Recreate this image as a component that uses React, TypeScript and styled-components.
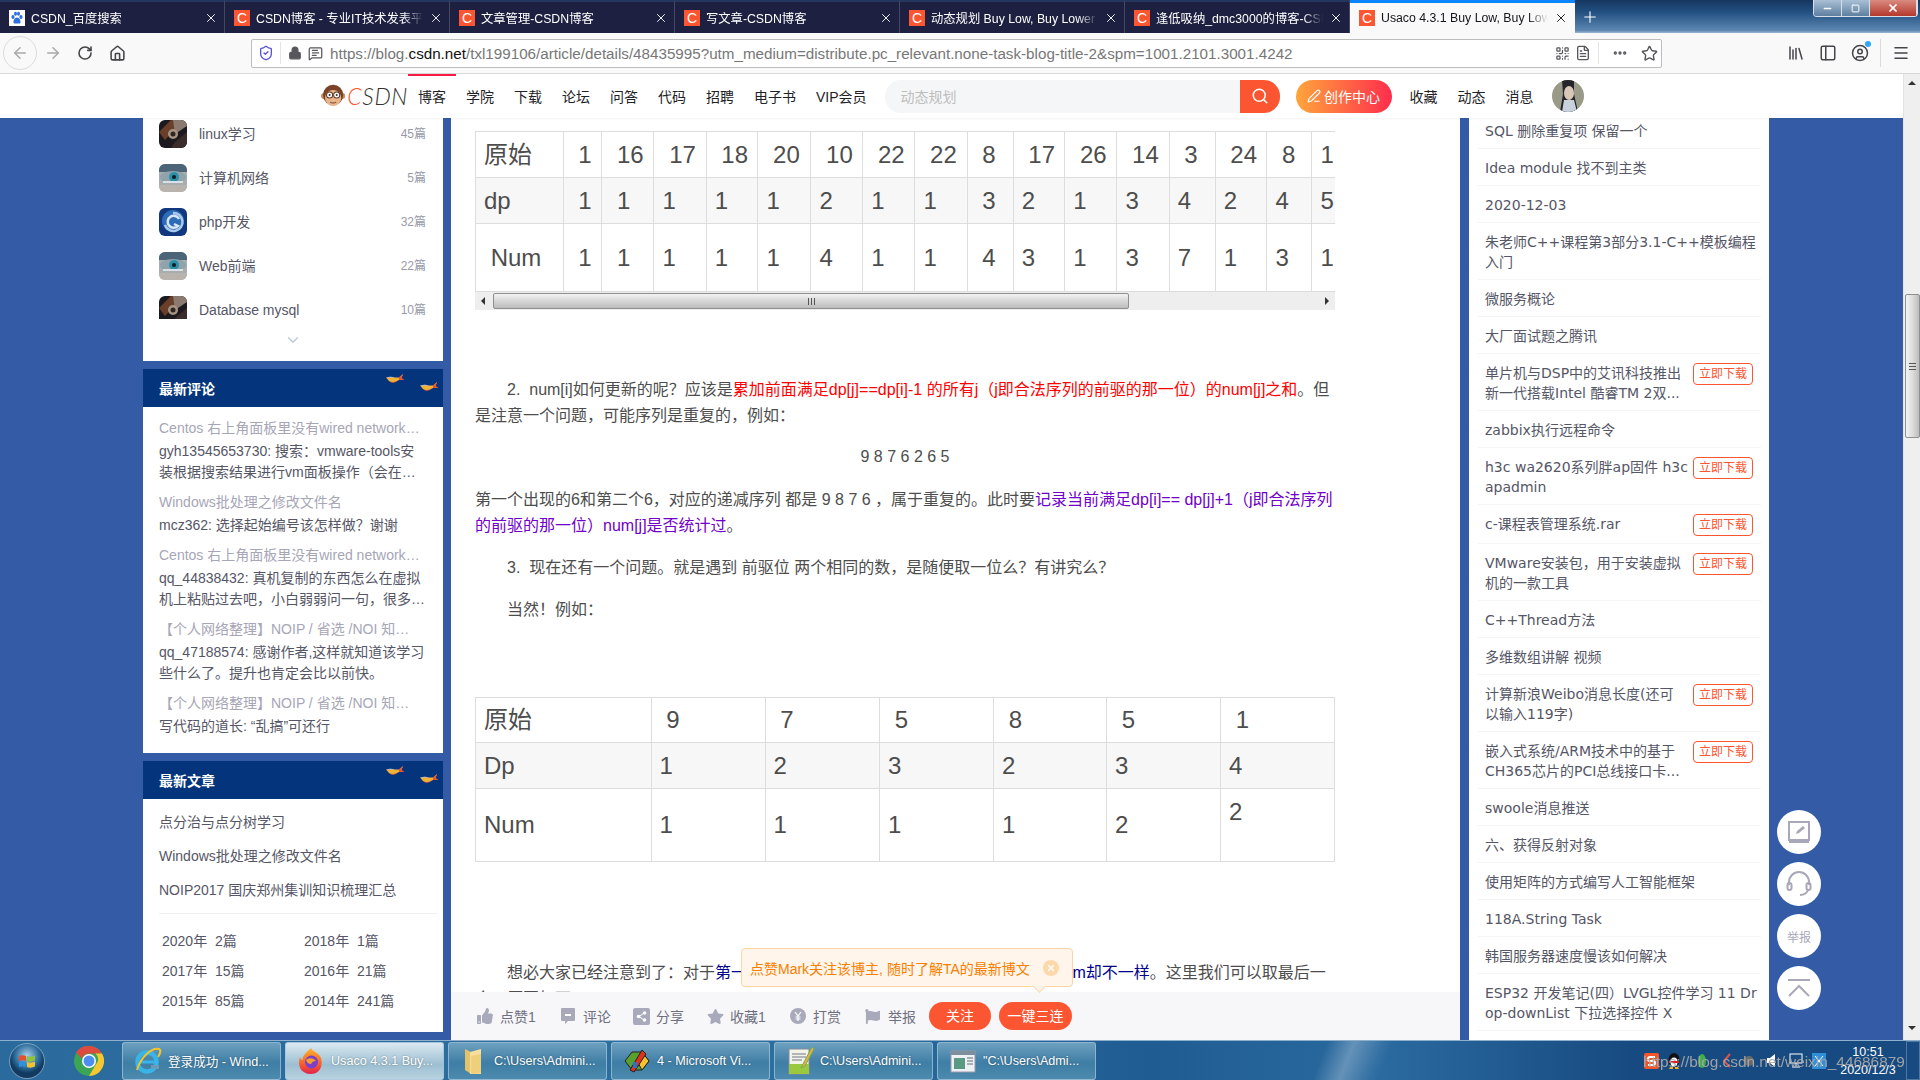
import React from "react";
import styled, { createGlobalStyle } from "styled-components";
import { ArrowLeft, ArrowRight, RotateCw, House, Star, Ellipsis, Menu, QrCode, Lock, MessageSquareText, X, Plus, Search, PenLine, ChevronDown, Minus, Square, FileText, CircleUser, PanelLeft, Library, ShieldCheck } from "lucide-react";
import { FaThumbsUp, FaFlag, FaStar } from "react-icons/fa";

const sans = `"Liberation Sans", "Noto Sans CJK SC", sans-serif`;

const Global = createGlobalStyle`
  html, body { margin: 0; padding: 0; width: 1920px; height: 1080px; overflow: hidden; background: #fff; }
  * { box-sizing: border-box; }
  body { font-family: ${sans}; }
`;

const Screen = styled.div`width:1920px;height:1080px;display:flex;flex-direction:column;overflow:hidden;`;

/* ---------- tabs ---------- */
const TabStrip = styled.div`
  height:33px;display:flex;flex:none;
  background:linear-gradient(180deg,#16355f 0%,#214f80 35%,#5c86b2 92%,#9cb6d0 100%);
  position:relative;
`;
const Tab = styled.div<{ $active?: boolean }>`
  width:225px;height:33px;display:flex;align-items:center;padding-left:9px;flex:none;
  background:${p => (p.$active ? "#f9f9fa" : "#1d2040")};
  color:${p => (p.$active ? "#15141a" : "#fff")};
  border-top:${p => (p.$active ? "3px solid #0a84ff" : "2px solid #24375e")};
  border-right:${p => (p.$active ? "none" : "1px solid #454863")};
  font-size:12.3px;
`;
const Favicon = styled.span`
  width:16px;height:16px;background:#fc5531;color:#fff;font-size:14px;line-height:16px;text-align:center;flex:none;
  font-family:${sans};
`;
const BaiduIcon = styled.span`
  width:16px;height:16px;background:#fff;flex:none;display:flex;align-items:center;justify-content:center;
`;
const TabTitle = styled.span`
  width:167px;margin-left:6px;white-space:nowrap;overflow:hidden;
  mask-image:linear-gradient(90deg,#000 88%,transparent 100%);
`;
const TabClose = styled.span`width:20px;margin-left:3px;display:flex;align-items:center;justify-content:center;`;
const NewTab = styled.span`width:30px;display:flex;align-items:center;justify-content:center;color:#fff;`;
const WinButtons = styled.div`
  margin-left:auto;margin-right:2px;height:17px;display:flex;border:1px solid #d5e0ea;border-top:none;border-radius:0 0 4px 4px;overflow:hidden;
`;
const WinButton = styled.span<{ $w: number; $close?: boolean }>`
  width:${p => p.$w}px;display:flex;align-items:center;justify-content:center;color:#fff;
  background:${p => (p.$close ? "linear-gradient(180deg,#d98a80,#b5382c)" : "linear-gradient(180deg,#a9c0d6,#5e7f9f)")};
  border-right:1px solid #d5e0ea;
`;

/* ---------- nav toolbar ---------- */
const NavBar = styled.div`
  height:41px;display:flex;align-items:center;flex:none;background:#f9f9fa;border-bottom:1px solid #d8d8d8;color:#4a4a4f;padding-left:3px;
`;
const BackCircle = styled.span`
  width:34px;height:34px;border-radius:50%;border:1px solid #dcdcdc;display:flex;align-items:center;justify-content:center;color:#a8a8a8;flex:none;
`;
const NavIcon = styled.span<{ $dim?: boolean }>`
  width:32px;display:flex;align-items:center;justify-content:center;flex:none;color:${p => (p.$dim ? "#a8a8a8" : "#45454a")};position:relative;
`;
const UrlBar = styled.div`
  width:1411px;height:29px;margin:0 118px;background:#fff;border:1px solid #bdbdbd;border-radius:2px;display:flex;align-items:center;flex:none;padding-left:4px;
`;
const UrlIcon = styled.span<{ $w: number }>`
  width:${p => p.$w}px;display:flex;align-items:center;justify-content:center;flex:none;color:#56565c;
`;
const UrlSep = styled.span`width:1px;height:22px;background:#e4e4e4;flex:none;margin:0 4px;`;
const UrlText = styled.span`
  font-size:15.2px;color:#777;white-space:nowrap;flex:1;overflow:hidden;margin-left:5px;
  b{font-weight:400;color:#111;}
`;
const ToolSep = styled.span`width:1px;height:28px;background:#dcdcdc;flex:none;margin:0 4px;`;
const BlueDot = styled.i`position:absolute;right:5px;top:-3px;width:6px;height:6px;border-radius:50%;background:#30a8f5;`;

/* ---------- page ---------- */
const Viewport = styled.div`flex:1;display:flex;min-height:0;`;
const Page = styled.div`flex:1;display:flex;flex-direction:column;min-width:0;`;
const VScroll = styled.div`
  width:17px;flex:none;background:#efefef;display:flex;flex-direction:column;align-items:center;color:#333;font-size:8px;
  border-left:1px solid #e6e6e6;
`;
const VArrow = styled.span<{ $down?: boolean }>`
  width:0;height:0;border-left:4px solid transparent;border-right:4px solid transparent;margin:${p => (p.$down ? "auto 0 10px" : "7px 0 0")};
  ${p => (p.$down ? "border-top:4px solid #333;" : "border-bottom:4px solid #333;")}
`;
const VThumb = styled.div`
  width:15px;height:144px;margin-top:209px;border:1px solid #8f8f8f;border-radius:2px;
  background:linear-gradient(90deg,#f3f3f3,#dcdcdc 50%,#bdbdbd);display:flex;align-items:center;justify-content:center;
`;
const Grip = styled.span`width:7px;height:7px;border-top:1px solid #555;border-bottom:1px solid #555;position:relative;
  &::after{content:"";position:absolute;left:0;right:0;top:2px;height:1px;background:#555;}`;

const Header = styled.div`
  height:44px;flex:none;background:#fff;display:flex;align-items:center;padding-left:321px;box-shadow:0 1px 2px rgba(0,0,0,.05);position:relative;z-index:2;
`;
const Logo = styled.div`width:87px;display:flex;align-items:center;flex:none;`;
const LogoText = styled.span`
  font-family:Lato,"Liberation Sans",sans-serif;font-size:23px;font-style:italic;font-weight:300;color:#333;letter-spacing:.6px;margin-left:2px;line-height:24px;
  i{color:#fc5531;}
`;
const NavLink = styled.a<{ $active?: boolean }>`
  padding:0 10px;height:44px;line-height:42px;font-size:14px;color:#222226;white-space:nowrap;flex:none;
  border-top:2px solid ${p => (p.$active ? "#fc1944" : "transparent")};
`;
const SearchBox = styled.div`
  width:395px;height:33px;margin-left:8px;background:#f5f6f7;border-radius:16px;display:flex;align-items:center;flex:none;overflow:hidden;
`;
const Placeholder = styled.span`flex:1;padding-left:16px;font-size:14px;color:#bdbdbd;`;
const SearchBtn = styled.span`
  width:40px;height:33px;background:#fc5531;display:flex;align-items:center;justify-content:center;color:#fff;
`;
const CreateBtn = styled.span`
  width:96px;height:33px;margin:0 8px 0 16px;border-radius:17px;background:linear-gradient(90deg,#ffa53b,#ff2d4d);color:#fff;font-size:14px;
  display:flex;align-items:center;justify-content:center;gap:3px;flex:none;
`;
const AvatarRound = styled.span`width:32px;height:32px;margin-left:8px;border-radius:50%;overflow:hidden;flex:none;display:block;`;

const Columns = styled.div`flex:1;display:flex;min-height:0;`;
const LeftCol = styled.aside`
  width:451px;flex:none;background:#345ba5;padding:0 8px 0 143px;display:flex;flex-direction:column;gap:8px;overflow:hidden;
`;
const Card = styled.section`background:#fff;flex:none;`;
const CatList = styled.div`height:201px;padding-top:2px;overflow:hidden;`;
const CatRow = styled.div`height:44px;display:flex;padding:0 17px 0 16px;color:#555666;font-size:14px;line-height:28px;`;
const CatThumb = styled.span`width:28px;height:28px;border-radius:6px;overflow:hidden;flex:none;margin-right:12px;display:block;`;
const CatCount = styled.span`margin-left:auto;font-size:12px;color:#9a9aaa;`;
const More = styled.div`height:42px;display:flex;justify-content:center;padding-top:12px;color:#b4c3da;`;
const CardHead = styled.div`
  height:38px;background:#03347c;color:#fff;font-size:14px;font-weight:700;display:flex;align-items:center;padding-left:16px;position:relative;
`;
const Fish = styled.svg<{ $r: number; $t: number }>`position:absolute;right:${p => p.$r}px;top:${p => p.$t}px;`;
const CommentList = styled.div`padding:8px 16px 9.5px;`;
const CommentItem = styled.div`margin-bottom:6px;`;
const CommentTitle = styled.div`
  height:26px;line-height:26px;width:264px;color:#a6a6b6;font-size:14px;white-space:nowrap;overflow:hidden;text-overflow:ellipsis;
`;
const CommentBody = styled.div`
  width:268px;color:#555666;font-size:14px;line-height:21px;display:-webkit-box;-webkit-box-orient:vertical;-webkit-line-clamp:2;overflow:hidden;
`;
const ArticleList = styled.div`padding-top:6px;`;
const ArticleLink = styled.div`padding-left:16px;height:34px;line-height:34px;color:#555666;font-size:14px;white-space:nowrap;`;
const Archive = styled.div`
  margin:6px 6px 0 16px;border-top:1px solid #f0f0f2;padding:12px 0 16px 3px;display:grid;grid-template-columns:142px 1fr;grid-auto-rows:30px;
  color:#555666;font-size:14px;line-height:30px;white-space:pre;
`;

/* ---------- article ---------- */
const Main = styled.main`width:1009px;flex:none;background:#fff;display:flex;flex-direction:column;min-height:0;position:relative;`;
const Article = styled.article`flex:1;overflow:hidden;padding:13px 125px 0 24px;color:#4d4d4d;font-size:16px;line-height:26px;min-height:0;`;
const TableClip = styled.div<{ $top?: number }>`width:860px;overflow:hidden;margin-top:${p => p.$top ?? 0}px;`;
const Table = styled.table<{ $w: number }>`border-collapse:collapse;table-layout:fixed;width:${p => p.$w}px;font-size:24px;line-height:28px;color:#4d4d4d;`;
const Col = styled.col<{ $w: number }>`width:${p => p.$w}px;`;
const Tr = styled.tr<{ $h: number; $alt?: boolean }>`height:${p => p.$h}px;background:${p => (p.$alt ? "#f7f7f7" : "#fff")};`;
const Td = styled.td<{ $raised?: boolean }>`
  border:1px solid #ddd;padding:${p => (p.$raised ? "8px 8px 34px" : "8px")};white-space:pre;overflow:hidden;
`;
const HScroll = styled.div`height:18px;width:860px;background:#eee;display:flex;align-items:center;`;
const HArrow = styled.span<{ $right?: boolean }>`
  width:0;height:0;border-top:4px solid transparent;border-bottom:4px solid transparent;
  ${p => (p.$right ? "border-left:4px solid #333;margin:0 6px 0 auto;" : "border-right:4px solid #333;margin:0 8px 0 6px;")}
`;
const HThumb = styled.div`
  width:636px;height:16px;border:1px solid #8f8f8f;border-radius:2px;background:linear-gradient(180deg,#f3f3f3,#d6d6d6 50%,#bdbdbd);
  display:flex;align-items:center;justify-content:center;
`;
const HGrip = styled.span`width:7px;height:7px;border-left:1px solid #555;border-right:1px solid #555;position:relative;
  &::after{content:"";position:absolute;top:0;bottom:0;left:2px;width:1px;background:#555;}`;
const P = styled.p<{ $top?: number; $center?: boolean; $flush?: boolean }>`
  margin:${p => p.$top ?? 16}px 0 0;text-indent:${p => (p.$flush ? 0 : 32)}px;text-align:${p => (p.$center ? "center" : "left")};width:860px;
`;
const Red = styled.span`color:#ff0000;`;
const Purple = styled.span`color:#7000c8;`;
const Navy = styled.span`color:#00008b;`;
const Tip = styled.div`
  position:absolute;left:290px;top:830px;width:332px;height:39px;background:#fff5eb;border:1px solid #fdd5a4;border-radius:4px;
  display:flex;align-items:center;padding-left:8px;color:#f77f00;font-size:14px;white-space:nowrap;z-index:3;
  &::after{content:"";position:absolute;right:28px;bottom:-5px;width:8px;height:8px;background:#fff5eb;border-right:1px solid #fdd5a4;border-bottom:1px solid #fdd5a4;transform:rotate(45deg);}
`;
const TipClose = styled.span`
  width:16px;height:16px;border-radius:50%;background:#fdd8ab;color:#fff;position:absolute;left:301px;top:11px;display:flex;align-items:center;justify-content:center;
`;
const ActionBar = styled.div`
  height:48px;flex:none;background:#f7f7f9;display:flex;align-items:center;padding-left:26px;color:#6f6f80;font-size:14px;position:relative;z-index:2;
`;
const Action = styled.span<{ $w: number }>`
  width:${p => p.$w}px;flex:none;display:flex;align-items:center;white-space:nowrap;
`;
const ActionIcon = styled.span`width:23px;flex:none;display:flex;align-items:center;color:#a9a9bc;`;
const RedBtn = styled.span<{ $w: number }>`
  width:${p => p.$w}px;height:28px;border-radius:14px;background:#fc5531;color:#fff;font-size:14px;line-height:28px;text-align:center;flex:none;margin-right:8px;
`;

/* ---------- right ---------- */
const RightCol = styled.aside`flex:1;background:#345ba5;padding-left:9px;position:relative;overflow:hidden;`;
const RecPanel = styled.div`width:300px;height:100%;background:#fff;padding:0 8px;overflow:hidden;`;
const RecList = styled.div`margin-top:-6px;`;
const RecRow = styled.div`
  display:flex;justify-content:space-between;align-items:flex-start;padding:9px 8px 7px;border-bottom:1px solid #f5f5f7;
  color:#555666;font-size:14px;line-height:20px;font-family:"DejaVu Sans","Noto Sans CJK SC",sans-serif;
`;
const RecText = styled.span`white-space:nowrap;`;
const DownBtn = styled.span`
  width:60px;height:22px;flex:none;border:1px solid #fc5531;border-radius:4px;color:#fc5531;font-size:12px;line-height:20px;text-align:center;
  font-family:${sans};
`;
const FloatStack = styled.div`position:absolute;left:317px;top:692px;display:flex;flex-direction:column;gap:8px;`;
const FloatBtn = styled.span`
  width:44px;height:44px;border-radius:50%;background:#fff;display:flex;align-items:center;justify-content:center;color:#a8a8b8;font-size:12px;
`;

/* ---------- taskbar ---------- */
const Taskbar = styled.div`
  height:40px;flex:none;display:flex;align-items:center;position:relative;color:#fff;border-top:1px solid #8eb0cc;
  background:
    linear-gradient(112deg,transparent 0 68.6%,rgba(255,255,255,.28) 70%,rgba(255,255,255,.05) 71.5%,transparent 72%),
    linear-gradient(90deg,#2b6a9c 0%,#2c6f9f 40%,#1f5c92 60%,#2a6a9f 72%,#174a80 85%,#164a80 100%);
`;
const Orb = styled.span`width:36px;height:36px;margin-left:9px;flex:none;display:block;`;
const Pinned = styled.span`width:30px;height:30px;margin:0 18px 0 29px;flex:none;display:block;`;
const TaskBtn = styled.div<{ $active?: boolean }>`
  width:159px;height:38px;margin-right:4px;flex:none;border:1px solid rgba(160,195,220,.75);border-radius:3px;display:flex;align-items:center;
  padding-left:10px;font-size:12.6px;white-space:nowrap;overflow:hidden;
  background:${p => (p.$active ? "linear-gradient(180deg,#dbe9f1,#9dbfd2 60%,#b8d2e0)" : "linear-gradient(180deg,#6da0bf,#3f7ea5 55%,#4c8aae)")};
  color:#fff;text-shadow:0 0 2px rgba(0,0,0,.4);
`;
const TaskIcon = styled.span`width:30px;height:30px;flex:none;margin-right:5px;display:flex;align-items:center;justify-content:center;`;
const Tray = styled.div`margin-left:auto;display:flex;align-items:center;height:100%;`;
const TrayIcon = styled.span<{ $w: number }>`width:${p => p.$w}px;flex:none;display:flex;justify-content:center;align-items:center;`;
const Clock = styled.div`width:64px;text-align:center;font-size:12.5px;line-height:18px;color:#fff;margin-left:6px;flex:none;`;
const ShowDesk = styled.div`width:14px;height:100%;margin-left:6px;border:1px solid rgba(255,255,255,.25);flex:none;`;
const Watermark = styled.span`
  position:absolute;left:1643px;top:11px;color:#a9a9a9;font-size:15.4px;white-space:nowrap;line-height:20px;opacity:.92;
`;

/* ---------- drawings ---------- */
const Swirl = () => (
  <svg width="28" height="28" viewBox="0 0 28 28"><rect width="28" height="28" fill="#11377d"/><circle cx="14" cy="13" r="11" fill="#2f6cb8"/><path d="M14 5a9 9 0 11-8 12" fill="none" stroke="#a9c9ea" strokeWidth="2.500"/><path d="M20 11a6 6 0 10-1 7l-4-2" fill="none" stroke="#d6e6f5" strokeWidth="2.500"/></svg>
);
const Eye = () => (
  <svg width="28" height="28" viewBox="0 0 28 28"><rect width="28" height="28" fill="#a9adb0"/><rect width="28" height="8" fill="#4c6478"/><rect y="21" width="28" height="7" fill="#b9b3ae"/><ellipse cx="14" cy="13" rx="13" ry="6" fill="#8fa3ad"/><circle cx="15" cy="13" r="5" fill="#2b8fa6"/><circle cx="15" cy="13" r="2" fill="#101820"/><path d="M4 18h20" stroke="#d8e2e6" strokeWidth="2"/></svg>
);
const Gear = () => (
  <svg width="28" height="28" viewBox="0 0 28 28"><rect width="28" height="28" fill="#1c1a1e"/><path d="M0 12 L12 0 L24 0 L6 20Z" fill="#6a3f2a"/><path d="M14 0h14v6L16 14z" fill="#8a7a70"/><circle cx="14" cy="14" r="5" fill="#a89482"/><circle cx="14" cy="14" r="2.500" fill="#2c2624"/><path d="M16 22 L28 12 L28 28 L12 28Z" fill="#3a2c2a"/></svg>
);
const Monkey = () => (
  <svg width="26" height="26" viewBox="0 0 24 24"><circle cx="3" cy="12" r="3" fill="#c98d63"/><circle cx="21" cy="12" r="3" fill="#c98d63"/><circle cx="12" cy="11" r="10" fill="#7a4328"/><ellipse cx="12" cy="14" rx="8" ry="8" fill="#e8b48a"/><circle cx="8.500" cy="11" r="3" fill="#fff" stroke="#5a3520"/><circle cx="15.500" cy="11" r="3" fill="#fff" stroke="#5a3520"/><circle cx="8.500" cy="11" r="1" fill="#333"/><circle cx="15.500" cy="11" r="1" fill="#333"/><path d="M9 18q3 2 6 0" stroke="#7a4328" fill="none"/></svg>
);
const FishIcon = ({ r, t }: { r: number; t: number }) => (
  <Fish $r={r} $t={t} width="18" height="10" viewBox="0 0 18 10">
    <path d="M0 3.500 H13 L17 0 L15.500 4 L18 6 L13 6 Q7 10 3 7Z" fill="#f2b134"/>
    <path d="M13 3.500 L17 0 L15.500 4 L18 6 L13 6Z" fill="#e8503a"/>
    <path d="M2 6.500 Q7 9.500 12 6.500 Q7 11 2 6.500Z" fill="#e8503a"/>
    <path d="M0 3.500 H9 Q5 1.800 0 3.500Z" fill="#fff"/>
  </Fish>
);
const PawIcon = () => (
  <svg width="14" height="14" viewBox="0 0 14 14" fill="#2f6fe0"><ellipse cx="3" cy="6" rx="1.600" ry="2"/><ellipse cx="11" cy="6" rx="1.600" ry="2"/><ellipse cx="5.500" cy="2.800" rx="1.500" ry="2"/><ellipse cx="8.500" cy="2.800" rx="1.500" ry="2"/><path d="M7 6.500c-2 0-4 3-3.500 5 .5 1.600 2 1 3.500 1s3 .6 3.500-1c.5-2-1.500-5-3.500-5z"/></svg>
);
const WinOrb = () => (
  <svg width="36" height="36" viewBox="0 0 36 36"><defs><radialGradient id="orbg" cx=".5" cy=".35"><stop offset="0" stopColor="#a9cfe8"/><stop offset=".7" stopColor="#2a6a9a"/><stop offset="1" stopColor="#12395f"/></radialGradient></defs><circle cx="18" cy="18" r="17.500" fill="url(#orbg)" stroke="#b8d0e0" strokeWidth=".6"/><path d="M10 13q3.500-1.500 7 0v5q-3.500-1.500-7 0z" fill="#e2522f"/><path d="M18 13q4 1.500 8-.5v5q-4 2-8 .5z" fill="#8fc33a"/><path d="M10 19q3.500-1.500 7 0v5q-3.500-1.500-7 0z" fill="#2f8fd8"/><path d="M18 19q4 1.500 8-.5v5q-4 2-8 .5z" fill="#f2c232"/></svg>
);
const ChromeIcon = () => (
  <svg width="30" height="30" viewBox="0 0 30 30"><circle cx="15" cy="15" r="15" fill="#3aa655"/><path d="M15 0a15 15 0 0113 7.500H15a7.500 7.500 0 00-7 5L2 6.500A15 15 0 0115 0z" fill="#dd4b3e"/><path d="M28 7.500A15 15 0 0115 30l6.500-11a7.500 7.500 0 000-11.500z" fill="#f7c733"/><circle cx="15" cy="15" r="7" fill="#fff"/><circle cx="15" cy="15" r="5.500" fill="#4d8ff0"/></svg>
);
const FoxIcon = () => (
  <svg width="30" height="30" viewBox="0 0 30 30"><defs><linearGradient id="fox" x1="0" y1="0" x2="0" y2="1"><stop offset="0" stopColor="#ffb32a"/><stop offset=".6" stopColor="#f6612c"/><stop offset="1" stopColor="#e0234f"/></linearGradient></defs><path d="M15 2c1 3 6 4 9 8 4 7 1 18-9 18S1 20 4 11c.5 2 1.500 3 2.500 3C6.500 9 11 6 15 2z" fill="url(#fox)"/><circle cx="15.500" cy="16" r="6.500" fill="#7b3fc9"/><path d="M10 14c3-3 8-2 10 1-3 0-4 1-5 3-2 0-4-1-5-4z" fill="#f6a02c"/></svg>
);
const IeIcon = () => (
  <svg width="30" height="30" viewBox="0 0 30 30"><circle cx="14" cy="16" r="9.500" fill="none" stroke="#39b4e8" strokeWidth="4.500"/><rect x="8" y="14.500" width="14" height="3" fill="#39b4e8"/><rect x="18" y="19" width="8" height="4" fill="#6b9bb8"/><path d="M4 24C8 10 20 1 26 3c2.500 1 1 5-1 8" fill="none" stroke="#f3c430" strokeWidth="2"/></svg>
);
const FolderIcon = () => (
  <svg width="30" height="30" viewBox="0 0 30 30"><path d="M6 3l6 3v22l-6-4z" fill="#e3c26c"/><path d="M11 6l11-3v25l-11 0z" fill="#f6df9c"/><path d="M12 10l10-2v19l-10 1z" fill="#f0cf7a"/></svg>
);
const VcIcon = () => (
  <svg width="28" height="28" viewBox="0 0 28 28"><path d="M2 14l7-9h10l7 9-7 9H9z" fill="#5aa02c" stroke="#222"/><path d="M14 14l5-9 7 9-7 9z" fill="#f2c232" stroke="#222"/><path d="M7 23L19 3l4 4L11 25z" fill="#e03020" stroke="#222"/><rect x="10" y="15" width="4" height="6" fill="#2f6fd0"/></svg>
);
const NoteIcon = () => (
  <svg width="30" height="30" viewBox="0 0 30 30"><rect x="4" y="3" width="20" height="25" fill="#f2f4e8" stroke="#889"/><rect x="4" y="18" width="20" height="10" fill="#9ac93f"/><path d="M7 8h14M7 11h14M7 14h10" stroke="#778"/><path d="M27 1l-9 17-2 4 4-2L29 3z" fill="#e3b23c" stroke="#7a5"/></svg>
);
const WinIcon = () => (
  <svg width="28" height="28" viewBox="0 0 28 28"><rect x="2" y="4" width="24" height="21" fill="#eef1f3" stroke="#99a"/><rect x="2" y="4" width="24" height="4" fill="#7d8f9d"/><rect x="5" y="11" width="11" height="11" fill="#5a9a80"/><path d="M18 11h6M18 14h6M18 17h6" stroke="#667"/></svg>
);
const Penguin = () => (
  <svg width="14" height="17" viewBox="0 0 14 17"><ellipse cx="7" cy="8" rx="5.500" ry="7" fill="#111"/><ellipse cx="7" cy="10" rx="3.500" ry="4.500" fill="#fff"/><path d="M2 9h10v2H2z" fill="#d92020"/><path d="M3 15h3v2H2zM8 15h3l1 2H8z" fill="#f2b020"/></svg>
);

const T1Cols = [87.6, 38.7, 52.2, 52.2, 51.8, 53, 51.8, 52.2, 52.1, 46.1, 51.7, 52.1, 52.3, 46, 51.7, 45, 52];
const n = "\u00a0";
type Row = { h: number; alt?: boolean; cells: string[] };
const T1Rows: Row[] = [
  { h: 46, cells: ["原始", n + "1", n + "16", n + "17", n + "18", n + "20", n + "10", n + "22", n + "22", n + "8", n + "17", n + "26", n + "14", n + "3", n + "24", n + "8", "1"] },
  { h: 46, alt: true, cells: ["dp", n + "1", n + "1", "1", "1", "1", "2", "1", "1", n + "3", "2", "1", "3", "4", "2", "4", "5"] },
  { h: 68, cells: [n + "Num", n + "1", n + "1", "1", "1", "1", "4", "1", "1", n + "4", "3", "1", "3", "7", "1", "3", "1"] },
];
const T2Cols = [175.6, 114, 114.5, 114, 113, 114, 114];
const T2Rows: Row[] = [
  { h: 45, cells: ["原始", n + "9", n + "7", n + "5", n + "8", n + "5", n + "1"] },
  { h: 46, alt: true, cells: ["Dp", "1", "2", "3", "2", "3", "4"] },
  { h: 73, cells: ["Num", "1", "1", "1", "1", "2", "2"] },
];

const tabs = [
  { t: "CSDN_百度搜索", baidu: true },
  { t: "CSDN博客 - 专业IT技术发表平台" },
  { t: "文章管理-CSDN博客" },
  { t: "写文章-CSDN博客" },
  { t: "动态规划 Buy Low, Buy Lower" },
  { t: "逢低吸纳_dmc3000的博客-CSDN博客" },
  { t: "Usaco 4.3.1 Buy Low, Buy Lower", active: true },
];
const navs = ["学院", "下载", "论坛", "问答", "代码", "招聘", "电子书", "VIP会员"];
const cats = [
  { n: "linux学习", c: "45篇", k: "g" },
  { n: "计算机网络", c: "5篇", k: "e" },
  { n: "php开发", c: "32篇", k: "s" },
  { n: "Web前端", c: "22篇", k: "e" },
  { n: "Database mysql", c: "10篇", k: "g" },
];
const comments = [
  ["Centos 右上角面板里没有wired network的解决办法", "gyh13545653730: 搜索：vmware-tools安装根据搜索结果进行vm面板操作（会在虚拟机里安装好工具后重启）"],
  ["Windows批处理之修改文件名", "mcz362: 选择起始编号该怎样做？谢谢"],
  ["Centos 右上角面板里没有wired network的解决办法", "qq_44838432: 真机复制的东西怎么在虚拟机上粘贴过去吧，小白弱弱问一句，很多博客都没有提到这个问题"],
  ["【个人网络整理】NOIP / 省选 /NOI 知识点大全梳理", "qq_47188574: 感谢作者,这样就知道该学习些什么了。提升也肯定会比以前快。"],
  ["【个人网络整理】NOIP / 省选 /NOI 知识点大全梳理", "写代码的道长: “乱搞”可还行"],
];
const recs: { l: string[]; b?: boolean }[] = [
  { l: ["SQL 删除重复项 保留一个"] },
  { l: ["Idea module 找不到主类"] },
  { l: ["2020-12-03"] },
  { l: ["朱老师C++课程第3部分3.1-C++模板编程", "入门"] },
  { l: ["微服务概论"] },
  { l: ["大厂面试题之腾讯"] },
  { l: ["单片机与DSP中的艾讯科技推出", "新一代搭载Intel 酷睿TM 2双..."], b: true },
  { l: ["zabbix执行远程命令"] },
  { l: ["h3c wa2620系列胖ap固件 h3c", "apadmin"], b: true },
  { l: ["c-课程表管理系统.rar"], b: true },
  { l: ["VMware安装包，用于安装虚拟", "机的一款工具"], b: true },
  { l: ["C++Thread方法"] },
  { l: ["多维数组讲解 视频"] },
  { l: ["计算新浪Weibo消息长度(还可", "以输入119字)"], b: true },
  { l: ["嵌入式系统/ARM技术中的基于", "CH365芯片的PCI总线接口卡..."], b: true },
  { l: ["swoole消息推送"] },
  { l: ["六、获得反射对象"] },
  { l: ["使用矩阵的方式编写人工智能框架"] },
  { l: ["118A.String Task"] },
  { l: ["韩国服务器速度慢该如何解决"] },
  { l: ["ESP32 开发笔记(四）LVGL控件学习 11 Dr", "op-downList 下拉选择控件 X"] },
];
const archive = ["2020年  2篇", "2018年  1篇", "2017年  15篇", "2016年  21篇", "2015年  85篇", "2014年  241篇"];

const DataTable = ({ cols, rows }: { cols: number[]; rows: Row[] }) => (
  <Table $w={cols.reduce((a, b) => a + b, 0)}>
    <colgroup>{cols.map((w, i) => <Col key={i} $w={w} />)}</colgroup>
    <tbody>
      {rows.map((r, i) => (
        <Tr key={i} $h={r.h} $alt={r.alt}>
          {r.cells.map((c, j) => <Td key={j} $raised={cols.length === 7 && i === 2 && j === 6}>{c}</Td>)}
        </Tr>
      ))}
    </tbody>
  </Table>
);

export default function App() {
  return (
    <Screen>
      <Global />
      <TabStrip>
        {tabs.map(t => (
          <Tab key={t.t} $active={t.active}>
            {t.baidu ? <BaiduIcon><PawIcon /></BaiduIcon> : <Favicon>C</Favicon>}
            <TabTitle>{t.t}</TabTitle>
            <TabClose><X size={14} strokeWidth={1.6} /></TabClose>
          </Tab>
        ))}
        <NewTab><Plus size={18} strokeWidth={1.5} /></NewTab>
        <WinButtons>
          <WinButton $w={28}><Minus size={11} strokeWidth={3} /></WinButton>
          <WinButton $w={28}><Square size={9} strokeWidth={2.5} /></WinButton>
          <WinButton $w={47} $close><X size={12} strokeWidth={3.5} /></WinButton>
        </WinButtons>
      </TabStrip>

      <NavBar>
        <BackCircle><ArrowLeft size={18} /></BackCircle>
        <NavIcon $dim><ArrowRight size={18} /></NavIcon>
        <NavIcon><RotateCw size={16} strokeWidth={2.4} /></NavIcon>
        <NavIcon><House size={17} strokeWidth={2.2} /></NavIcon>
        <UrlBar>
          <UrlIcon $w={20}><ShieldCheck size={16} color="#5a55d8" /></UrlIcon>
          <UrlSep />
          <UrlIcon $w={20}><Lock size={14} fill="#56565c" /></UrlIcon>
          <UrlIcon $w={20}><MessageSquareText size={15} /></UrlIcon>
          <UrlText>https://blog.<b>csdn.net</b>/txl199106/article/details/48435995?utm_medium=distribute.pc_relevant.none-task-blog-title-2&amp;spm=1001.2101.3001.4242</UrlText>
          <UrlIcon $w={20}><QrCode size={15} /></UrlIcon>
          <UrlIcon $w={22}><FileText size={16} /></UrlIcon>
          <UrlSep />
          <UrlIcon $w={34}><Ellipsis size={16} strokeWidth={3} /></UrlIcon>
          <UrlIcon $w={24}><Star size={17} /></UrlIcon>
        </UrlBar>
        <NavIcon><Library size={18} /></NavIcon>
        <NavIcon><PanelLeft size={18} /></NavIcon>
        <NavIcon><CircleUser size={18} /><BlueDot /></NavIcon>
        <ToolSep />
        <NavIcon><Menu size={18} /></NavIcon>
      </NavBar>

      <Viewport>
        <Page>
          <Header>
            <Logo><Monkey /><LogoText><i>C</i>SDN</LogoText></Logo>
            <NavLink $active>博客</NavLink>
            {navs.map(x => <NavLink key={x}>{x}</NavLink>)}
            <SearchBox><Placeholder>动态规划</Placeholder><SearchBtn><Search size={18} /></SearchBtn></SearchBox>
            <CreateBtn><PenLine size={14} />创作中心</CreateBtn>
            <NavLink>收藏</NavLink>
            <NavLink>动态</NavLink>
            <NavLink>消息</NavLink>
            <AvatarRound>
              <svg width="32" height="32" viewBox="0 0 32 32"><rect width="32" height="32" fill="#9a9a88"/><path d="M10 0h12v14l4 18H8l3-18z" fill="#24242a"/><ellipse cx="17" cy="13" rx="5" ry="7" fill="#d9c8b8"/><path d="M12 20h10l3 12H10z" fill="#c8d2dc"/></svg>
            </AvatarRound>
          </Header>
          <Columns>
            <LeftCol>
              <Card>
                <CatList>
                  {cats.map(c => (
                    <CatRow key={c.n}>
                      <CatThumb>{c.k === "g" ? <Gear /> : c.k === "e" ? <Eye /> : <Swirl />}</CatThumb>
                      {c.n}
                      <CatCount>{c.c}</CatCount>
                    </CatRow>
                  ))}
                </CatList>
                <More><ChevronDown size={18} strokeWidth={1.5} /></More>
              </Card>
              <Card>
                <CardHead>最新评论<FishIcon r={39} t={5} /><FishIcon r={5} t={13} /></CardHead>
                <CommentList>
                  {comments.map((c, i) => (
                    <CommentItem key={i}>
                      <CommentTitle>{c[0]}</CommentTitle>
                      <CommentBody>{c[1]}</CommentBody>
                    </CommentItem>
                  ))}
                </CommentList>
              </Card>
              <Card>
                <CardHead>最新文章<FishIcon r={39} t={5} /><FishIcon r={5} t={13} /></CardHead>
                <ArticleList>
                  <ArticleLink>点分治与点分树学习</ArticleLink>
                  <ArticleLink>Windows批处理之修改文件名</ArticleLink>
                  <ArticleLink>NOIP2017 国庆郑州集训知识梳理汇总</ArticleLink>
                </ArticleList>
                <Archive>{archive.map(a => <span key={a}>{a}</span>)}</Archive>
              </Card>
            </LeftCol>
            <Main>
              <Article>
                <TableClip><DataTable cols={T1Cols} rows={T1Rows} /></TableClip>
                <HScroll><HArrow /><HThumb><HGrip /></HThumb><HArrow $right /></HScroll>
                <P $top={67}>2.&nbsp; num[i]如何更新的呢？应该是<Red>累加前面满足dp[j]==dp[i]-1 的所有j（j即合法序列的前驱的那一位）的num[j]之和</Red>。但是注意一个问题，可能序列是重复的，例如：</P>
                <P $center $flush $top={15}>9 8 7 6 2 6 5</P>
                <P $flush $top={17}>第一个出现的6和第二个6，对应的递减序列 都是 9 8 7 6 ，属于重复的。此时要<Purple>记录当前满足dp[i]== dp[j]+1（j即合法序列的前驱的那一位）num[j]是否统计过</Purple>。</P>
                <P>3.&nbsp; 现在还有一个问题。就是遇到 前驱位 两个相同的数，是随便取一位么？有讲究么？</P>
                <P>当然！例如：</P>
                <TableClip $top={74}><DataTable cols={T2Cols} rows={T2Rows} /></TableClip>
                <P $top={98}>想必大家已经注意到了：对于<Navy>第一个5和第二个5，它们对应的dp值都相同，但num却不一样</Navy>。这里我们可以取最后一个，原因如下：</P>
              </Article>
              <Tip>点赞Mark关注该博主, 随时了解TA的最新博文<TipClose><X size={10} strokeWidth={3} /></TipClose></Tip>
              <ActionBar>
                <Action $w={83}><ActionIcon><FaThumbsUp size={16} /></ActionIcon>点赞1</Action>
                <Action $w={73}><ActionIcon><svg width="16" height="18" viewBox="0 0 16 18"><path d="M2 1h12a1 1 0 011 1v11a1 1 0 01-1 1H8l-3 3v-3H2a1 1 0 01-1-1V2a1 1 0 011-1z" fill="currentColor"/><rect x="5" y="7" width="6" height="2" fill="#fff"/></svg></ActionIcon>评论</Action>
                <Action $w={74}><ActionIcon><svg width="17" height="17" viewBox="0 0 17 17"><rect x="0" y="0" width="17" height="17" rx="2" fill="currentColor"/><circle cx="11.500" cy="5" r="1.800" fill="#fff"/><circle cx="5.500" cy="8.500" r="1.800" fill="#fff"/><circle cx="11.500" cy="12" r="1.800" fill="#fff"/><path d="M11 5L6 8.500l5 3.500" stroke="#fff" fill="none"/></svg></ActionIcon>分享</Action>
                <Action $w={83}><ActionIcon><FaStar size={17} /></ActionIcon>收藏1</Action>
                <Action $w={75}><ActionIcon><svg width="16" height="16" viewBox="0 0 16 16"><circle cx="8" cy="8" r="8" fill="currentColor"/><path d="M5 4l3 4 3-4M8 8v5M5.500 9h5M5.500 11h5" stroke="#fff" fill="none" strokeWidth="1.200"/></svg></ActionIcon>打赏</Action>
                <Action $w={64}><ActionIcon><FaFlag size={15} /></ActionIcon>举报</Action>
                <RedBtn $w={62}>关注</RedBtn>
                <RedBtn $w={73}>一键三连</RedBtn>
              </ActionBar>
            </Main>
            <RightCol>
              <RecPanel>
                <RecList>
                  {recs.map((r, i) => (
                    <RecRow key={i}>
                      <RecText>{r.l.map((x, k) => <React.Fragment key={k}>{k > 0 && <br />}{x}</React.Fragment>)}</RecText>
                      {r.b && <DownBtn>立即下载</DownBtn>}
                    </RecRow>
                  ))}
                </RecList>
              </RecPanel>
              <FloatStack>
                <FloatBtn><svg width="24" height="24" viewBox="0 0 24 24" fill="none" stroke="currentColor" strokeWidth="2"><path d="M2 2h20v18H2z"/><path d="M2 22h20"/><path d="M9 14l1-3 6-5 2 2-6 5z" fill="currentColor" stroke="none"/></svg></FloatBtn>
                <FloatBtn><svg width="26" height="26" viewBox="0 0 26 26" fill="none" stroke="currentColor" strokeWidth="2"><path d="M3 14V11a10 10 0 0120 0v3"/><rect x="1.500" y="12" width="4" height="7" rx="2"/><rect x="20.500" y="12" width="4" height="7" rx="2"/><path d="M22 19q-2 5-8 5"/></svg></FloatBtn>
                <FloatBtn>举报</FloatBtn>
                <FloatBtn><svg width="24" height="20" viewBox="0 0 24 20" fill="none" stroke="currentColor" strokeWidth="2"><path d="M1 2h22M2 18l10-10 10 10"/></svg></FloatBtn>
              </FloatStack>
            </RightCol>
          </Columns>
        </Page>
        <VScroll>
          <VArrow />
          <VThumb><Grip /></VThumb>
          <VArrow $down />
        </VScroll>
      </Viewport>

      <Taskbar>
        <Orb><WinOrb /></Orb>
        <Pinned><ChromeIcon /></Pinned>
        <TaskBtn><TaskIcon><IeIcon /></TaskIcon>登录成功 - Wind...</TaskBtn>
        <TaskBtn $active><TaskIcon><FoxIcon /></TaskIcon>Usaco 4.3.1 Buy...</TaskBtn>
        <TaskBtn><TaskIcon><FolderIcon /></TaskIcon>C:\Users\Admini...</TaskBtn>
        <TaskBtn><TaskIcon><VcIcon /></TaskIcon>4 - Microsoft Vi...</TaskBtn>
        <TaskBtn><TaskIcon><NoteIcon /></TaskIcon>C:\Users\Admini...</TaskBtn>
        <TaskBtn><TaskIcon><WinIcon /></TaskIcon>"C:\Users\Admi...</TaskBtn>
        <Tray>
          <TrayIcon $w={18}><svg width="15" height="16"><rect width="15" height="16" rx="2" fill="#f2562a"/><path d="M11 4H6a2 2 0 000 4h3a2 2 0 010 4H4" stroke="#fff" strokeWidth="2" fill="none"/></svg></TrayIcon>
          <TrayIcon $w={28}><Penguin /></TrayIcon>
          <TrayIcon $w={28}><svg width="10" height="15"><ellipse cx="5" cy="8" rx="4" ry="7" fill="#3fae49"/></svg></TrayIcon>
          <TrayIcon $w={22}><svg width="10" height="15"><path d="M8 1L2 8l6 6" stroke="#d9534f" strokeWidth="2" fill="none"/></svg></TrayIcon>
          <TrayIcon $w={22}><svg width="10" height="15"><circle cx="5" cy="8" r="5" fill="#6a6a6a"/></svg></TrayIcon>
          <TrayIcon $w={24}><svg width="12" height="15"><path d="M1 5h3l5-4v13l-5-4H1z" fill="#fff"/></svg></TrayIcon>
          <TrayIcon $w={24}><svg width="14" height="15"><rect x="1" y="1" width="12" height="9" fill="none" stroke="#fff"/><path d="M7 10v3M3 14h8" stroke="#fff"/></svg></TrayIcon>
          <TrayIcon $w={22}><svg width="14" height="16"><rect width="14" height="16" fill="#2f8fd8"/><path d="M3 3l8 10M11 3L3 13" stroke="#fff"/></svg></TrayIcon>
          <Clock>10:51<br />2020/12/3</Clock>
          <ShowDesk />
        </Tray>
        <Watermark>https://blog.csdn.net/weixin_44686879</Watermark>
      </Taskbar>
    </Screen>
  );
}
